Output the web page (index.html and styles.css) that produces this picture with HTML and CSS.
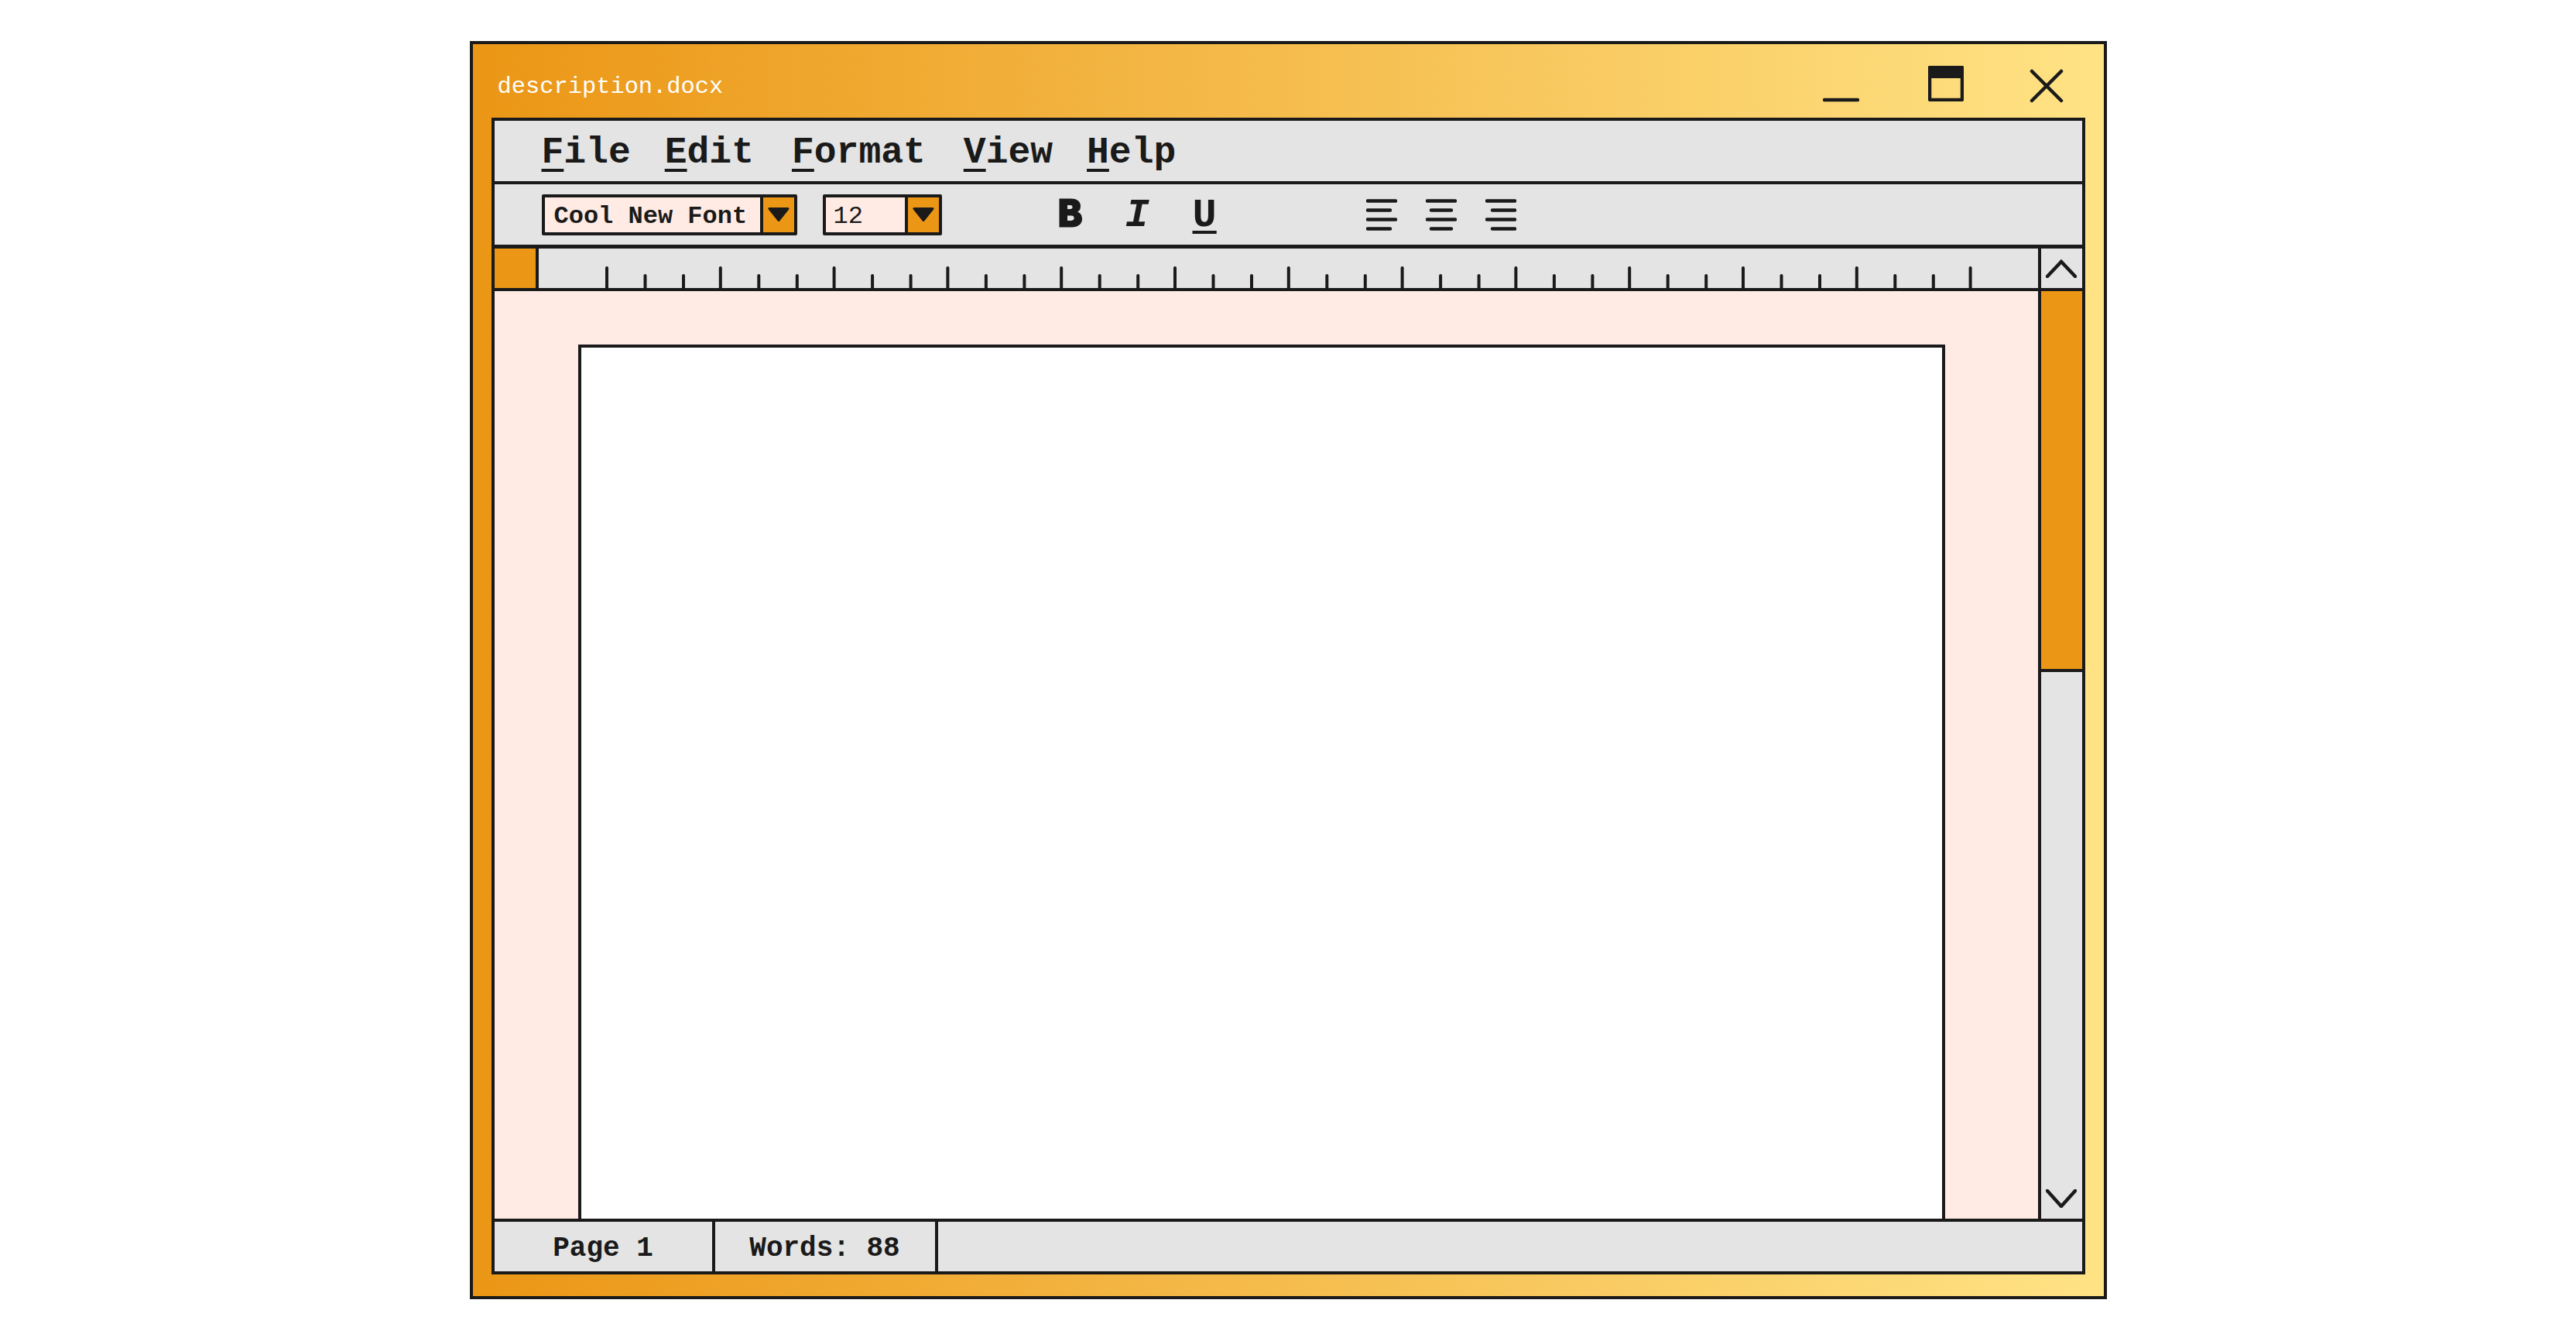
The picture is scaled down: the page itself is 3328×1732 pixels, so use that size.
FILE: index.html
```html
<!DOCTYPE html>
<html>
<head>
    <title>description.docx</title>
    <link rel="stylesheet" href="styles.css">
</head>
<body>
    <div class="window">
        <div class="titlebar">
            <span class="title">description.docx</span>
            <div class="win-buttons">
                <svg class="win-min" width="47" height="6" viewBox="0 0 47 6"><path d="M2 3H45" class="line"/></svg>
                <svg class="win-max" width="46" height="46" viewBox="0 0 46 46"><rect x="2" y="2" width="42" height="42" rx="1" class="line"/><rect x="0" y="0" width="46" height="16" rx="2" fill="#1a1a1a"/></svg>
                <svg class="win-close" width="44" height="44" viewBox="0 0 44 44"><path d="M3 3L41 41M41 3L3 41" class="line"/></svg>
            </div>
        </div>
        <div class="frame">
            <div class="menubar">
                <span class="menu-item"><u>F</u>ile</span>
                <span class="menu-item"><u>E</u>dit</span>
                <span class="menu-item menu-wide"><u>F</u>ormat</span>
                <span class="menu-item menu-wide"><u>V</u>iew</span>
                <span class="menu-item"><u>H</u>elp</span>
            </div>
            <div class="toolbar">
                <div class="select select-font">
                    <span class="select-value">Cool New Font</span>
                    <span class="select-arrow"><svg width="28" height="18" viewBox="0 0 28 18"><path d="M2 1.5H26L14 16.5Z" fill="#1a1a1a" stroke="#1a1a1a" stroke-width="3" stroke-linejoin="round"/></svg></span>
                </div>
                <div class="select select-size">
                    <span class="select-value">12</span>
                    <span class="select-arrow"><svg width="28" height="18" viewBox="0 0 28 18"><path d="M2 1.5H26L14 16.5Z" fill="#1a1a1a" stroke="#1a1a1a" stroke-width="3" stroke-linejoin="round"/></svg></span>
                </div>
                <div class="format-buttons">
                    <span class="fmt fmt-b">B</span>
                    <span class="fmt fmt-i">I</span>
                    <span class="fmt fmt-u">U</span>
                </div>
                <div class="align-buttons">
                    <svg width="40" height="41" viewBox="0 0 40 41"><path d="M2 2.5H38M2 14.500H31M2 26.500H38M2 38.500H31" class="line"/></svg>
                    <svg width="40" height="41" viewBox="0 0 40 41"><path d="M2 2.500H38M7 14.500H33M2 26.500H38M7 38.500H33" class="line"/></svg>
                    <svg width="40" height="41" viewBox="0 0 40 41"><path d="M2 2.500H38M9 14.500H38M2 26.500H38M9 38.500H38" class="line"/></svg>
                </div>
            </div>
            <div class="workspace">
                <div class="main-column">
                    <div class="ruler-row">
                        <div class="ruler-corner"></div>
                        <div class="ruler"><svg width="1937" height="51" viewBox="0 0 1937 51"><path id="ticks" class="tick" d=""/></svg></div>
                    </div>
                    <div class="pasteboard">
                        <div class="page"></div>
                    </div>
                </div>
                <div class="scrollbar">
                    <div class="scroll-btn scroll-up"><svg width="40" height="24" viewBox="0 0 40 24"><path d="M2 22L20 3L38 22" class="line"/></svg></div>
                    <div class="scroll-thumb"></div>
                    <div class="scroll-track"></div>
                    <div class="scroll-down"><svg width="40" height="24" viewBox="0 0 40 24"><path d="M2 2L20 22L38 2" class="line"/></svg></div>
                </div>
            </div>
            <div class="statusbar">
                <span class="status-cell status-page">Page 1</span>
                <span class="status-cell status-words">Words: 88</span>
            </div>
        </div>
    </div>
    <script>
        // ruler ticks: one tall, two short, repeating
        let d = '';
        for (let i = 0; i < 37; i++) {
            let x = 88 + Math.floor(i / 3) * 146.8 + (i % 3) * 49.5;
            d += 'M' + x.toFixed(1) + ' 51V' + (i % 3 === 0 ? 25 : 35);
        }
        document.getElementById('ticks').setAttribute('d', d);
    </script>
</body>
</html>
```

FILE: styles.css
```css
body {
    margin: 0;
    padding-top: 53px;
    display: flex;
    justify-content: center;
    background-color: #fff;
    color: #1a1a1a;
    font-family: "Liberation Mono", monospace;
}
.line {
    fill: none;
    stroke: #1a1a1a;
    stroke-width: 4.5;
    stroke-linecap: round;
}
.tick {
    fill: none;
    stroke: #1a1a1a;
    stroke-width: 4;
    stroke-linecap: round;
}
.window {
    width: 2115px;
    height: 1625px;
    box-sizing: border-box;
    border: 4px solid #1a1a1a;
    padding: 0 24px 28px 24px;
    background: linear-gradient(90deg, #eb9615, #ffe385);
    display: flex;
    flex-direction: column;
}
.titlebar {
    height: 95px;
    flex: none;
    display: flex;
    justify-content: space-between;
}
.title {
    margin: 35px 0 0 8px;
    font-size: 30.4px;
    line-height: 40px;
    color: #fff;
}
.win-buttons {
    display: flex;
    align-items: flex-start;
    margin-right: 28px;
}
.win-min { margin-top: 69px; }
.win-max { margin: 28px 0 0 89px; }
.win-close { margin: 32px 0 0 85px; }
.frame {
    flex: 1;
    border: 4px solid #1a1a1a;
    display: flex;
    flex-direction: column;
    min-height: 0;
    background-color: #e4e4e4;
}
.menubar {
    height: 75px;
    padding-top: 3px;
    flex: none;
    border-bottom: 4px solid #1a1a1a;
    display: flex;
    align-items: center;
    gap: 44px;
    padding-left: 61px;
    font-size: 48px;
    font-weight: bold;
}
.menu-wide { margin-left: 5px; }
.menu-item u {
    text-decoration-thickness: 4px;
    text-underline-offset: 8px;
}
.toolbar {
    height: 78px;
    flex: none;
    border-bottom: 5px solid #1a1a1a;
    display: flex;
    align-items: center;
    padding-left: 61px;
}
.select {
    height: 53px;
    box-sizing: border-box;
    border: 4px solid #1a1a1a;
    border-radius: 2px;
    display: flex;
    background-color: #ffebe4;
    font-size: 32px;
    font-weight: bold;
}
.select-font { width: 330px; }
.select-size {
    width: 154px;
    margin-left: 33px;
    font-weight: normal;
}
.select-value {
    flex: 1;
    display: flex;
    align-items: center;
    padding: 4px 0 0 12px;
}
.select-size .select-value { padding-left: 10px; }
.select-arrow {
    width: 40px;
    flex: none;
    border-left: 4px solid #1a1a1a;
    background-color: #eb9615;
    display: flex;
    justify-content: center;
    align-items: center;
}
.format-buttons {
    display: flex;
    margin-left: 150px;
    height: 56px;
    align-items: center;
}
.fmt {
    font-size: 52px;
    width: 87px;
    flex: none;
    padding-top: 2px;
}
.fmt-b {
    font-weight: bold;
    -webkit-text-stroke: 3px #1a1a1a;
}
.fmt-i { font-style: italic; font-weight: bold; }
.fmt-u { text-decoration: underline; text-decoration-thickness: 4px; text-underline-offset: 6px; font-weight: bold; width: 31px; }
.align-buttons {
    display: flex;
    gap: 37px;
    margin-left: 193px;
}
.workspace {
    flex: 1;
    display: flex;
    min-height: 0;
}
.main-column {
    flex: 1;
    display: flex;
    flex-direction: column;
}
.ruler-row {
    height: 51px;
    flex: none;
    display: flex;
    border-bottom: 4px solid #1a1a1a;
}
.ruler-corner {
    width: 53px;
    background-color: #eb9615;
    border-right: 4px solid #1a1a1a;
}
.ruler svg { display: block; }
.pasteboard {
    flex: 1;
    background-color: #ffebe4;
    padding: 69px 120px 0 108px;
    display: flex;
    min-height: 0;
}
.page {
    flex: 1;
    background-color: #fff;
    border: 4px solid #1a1a1a;
    border-bottom: none;
}
.scrollbar {
    width: 53px;
    flex: none;
    border-left: 4px solid #1a1a1a;
    display: flex;
    flex-direction: column;
}
.scroll-btn {
    height: 51px;
    flex: none;
    border-bottom: 4px solid #1a1a1a;
    display: flex;
    justify-content: center;
    align-items: center;
}
.scroll-thumb {
    height: 488px;
    flex: none;
    background-color: #eb9615;
    border-bottom: 4px solid #1a1a1a;
}
.scroll-track { flex: 1; }
.scroll-down {
    height: 38px;
    flex: none;
    display: flex;
    justify-content: center;
}
.statusbar {
    height: 64px;
    flex: none;
    border-top: 4px solid #1a1a1a;
    display: flex;
    font-size: 36px;
    font-weight: bold;
}
.status-cell {
    box-sizing: border-box;
    padding-top: 4px;
    border-right: 4px solid #1a1a1a;
    display: flex;
    align-items: center;
    justify-content: center;
}
.status-page { width: 285px; }
.status-words { width: 288px; }
```
